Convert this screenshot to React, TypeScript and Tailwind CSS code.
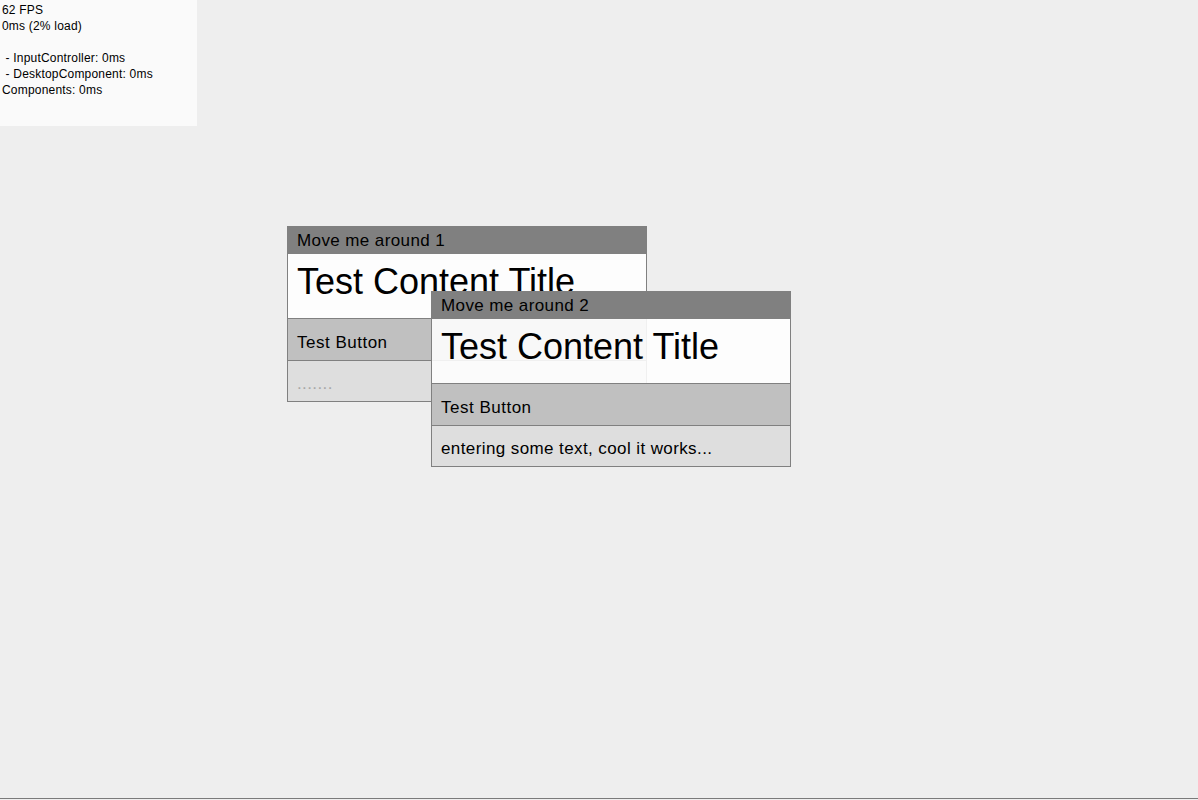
import type { ReactNode } from "react";

type DesktopWindowProps = {
  title: string;
  text?: string;
  placeholder: string;
  className: string;
};

const statLines = [
  "62 FPS",
  "0ms (2% load)",
  "",
  " - InputController: 0ms",
  " - DesktopComponent: 0ms",
  "Components: 0ms",
];

function StatsPanel() {
  return (
    <div className="absolute left-0 top-0 h-[126px] w-[197px] bg-[#fafafa] pl-[2px] pt-[2px] font-['Liberation_Sans',Arial,sans-serif] text-[12px] leading-[16px] tracking-[0.2px] text-black">
      {statLines.map((line, index) => (
        <div key={index} className="h-[16px] whitespace-pre">
          {line}
        </div>
      ))}
    </div>
  );
}

function Row({ children, className }: { children: ReactNode; className: string }) {
  return <div className={`px-[9px] ${className}`}>{children}</div>;
}

function DesktopWindow({ title, text, placeholder, className }: DesktopWindowProps) {
  return (
    <div
      className={`absolute flex w-[360px] flex-col border border-[#808080] font-['Liberation_Sans',Arial,sans-serif] text-black ${className}`}
    >
      <Row className="-mt-px flex h-[28px] items-center bg-[#808080] pt-[1px] text-[17px] leading-[17px] tracking-[0.4px]">
        {title}
      </Row>
      <Row className="h-[65px] border-b border-[#808080] bg-white/[0.88] pt-[10px] text-[36px] leading-[36px]">
        Test Content Title
      </Row>
      <Row className="h-[42px] border-b border-[#808080] bg-[#c0c0c0] pt-[15px] text-[17px] leading-[17px] tracking-[0.5px]">
        Test Button
      </Row>
      <Row className="h-[40px] bg-[#dedede] pt-[14px] text-[17px] leading-[17px] tracking-[0.4px]">
        {text ? text : <span className="text-[#a8a8a8]">{placeholder}</span>}
      </Row>
    </div>
  );
}

export default function App() {
  return (
    <div className="flex h-[800px] w-full flex-col overflow-hidden bg-[#eeeeee]">
      <div className="relative h-[798px] shrink-0 bg-[#eeeeee]">
        <StatsPanel />
        <DesktopWindow
          title="Move me around 1"
          placeholder="......."
          className="left-[287px] top-[226px]"
        />
        <DesktopWindow
          title="Move me around 2"
          text="entering some text, cool it works..."
          placeholder="......."
          className="left-[431px] top-[291px]"
        />
      </div>
      <div className="h-px shrink-0 bg-[#7a7a7a]" />
      <div className="shrink-0 pt-px text-center font-['Liberation_Serif','Times_New_Roman',serif] text-[16px] leading-[20px] text-black">
        Drag the windows around by their title bars, press the button or type some text.
      </div>
    </div>
  );
}
